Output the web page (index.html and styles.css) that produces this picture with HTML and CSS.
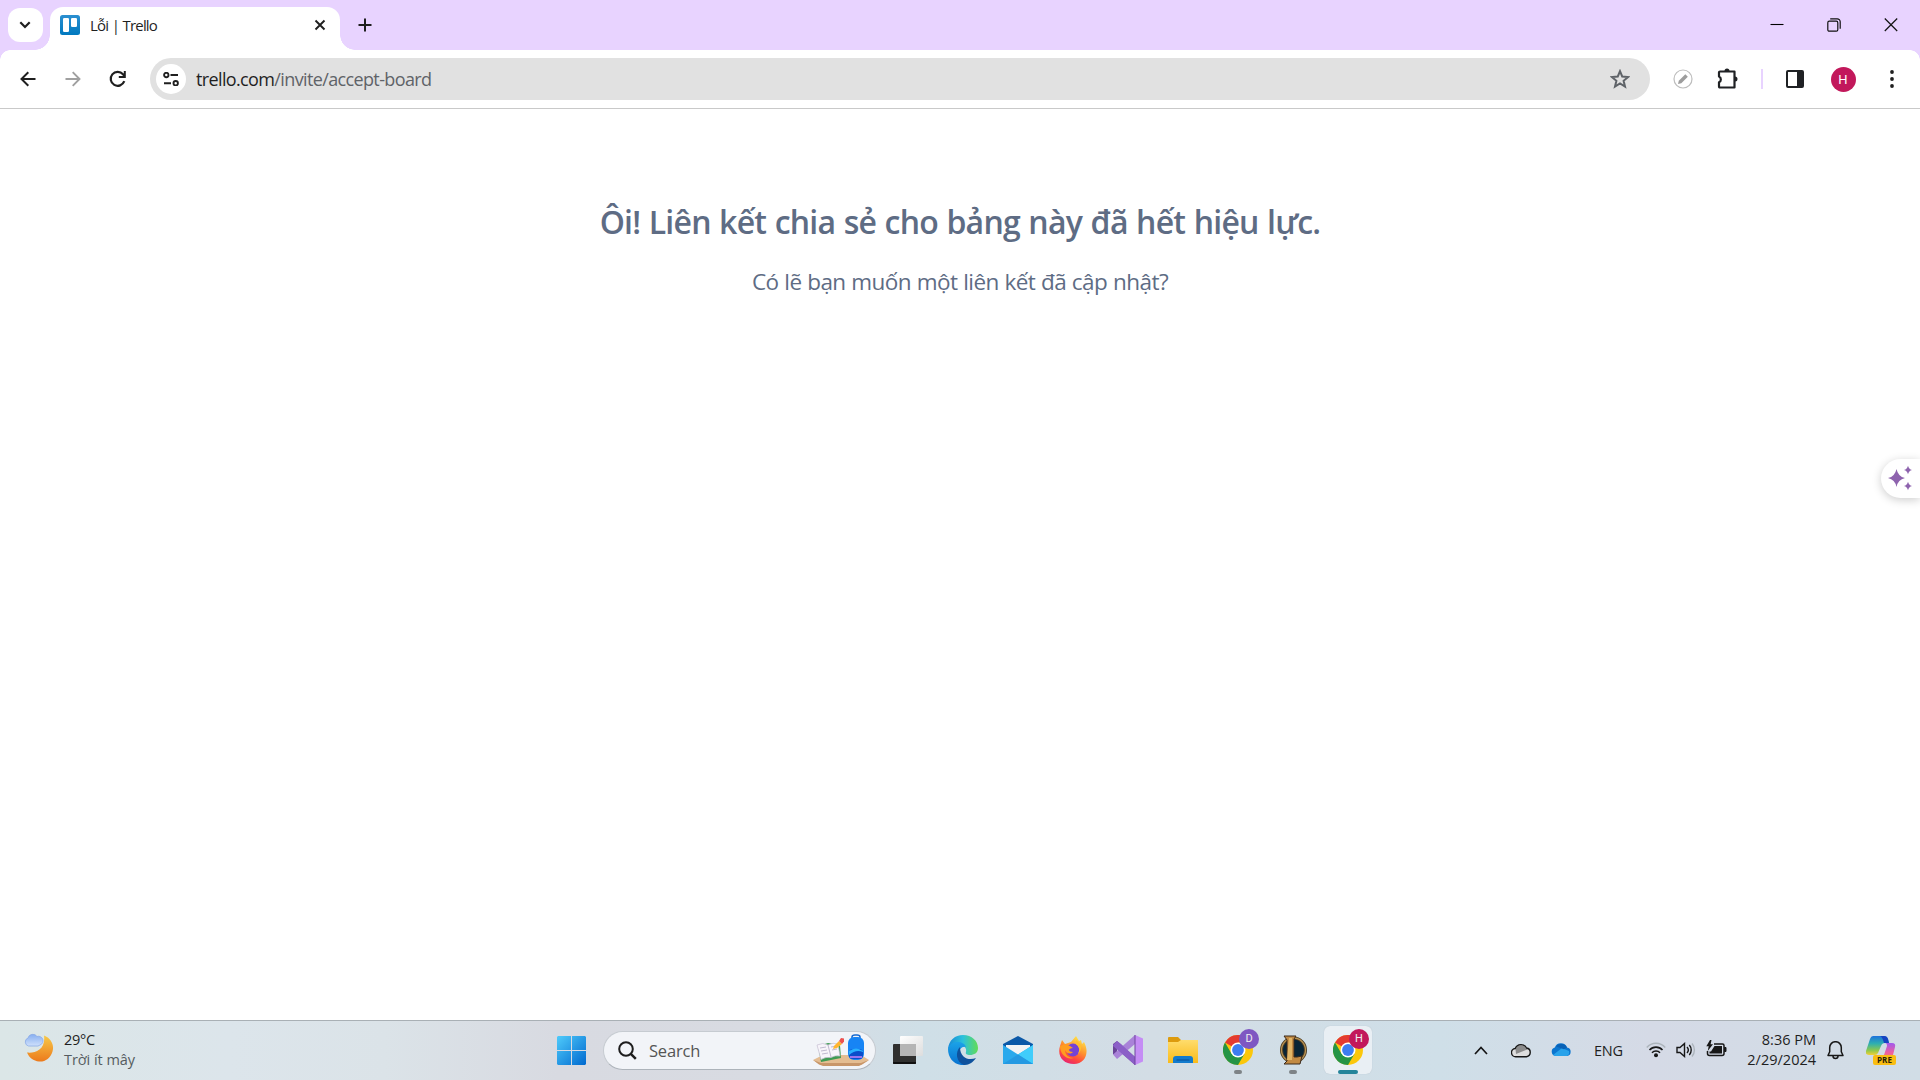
FILE: index.html
```html
<!DOCTYPE html>
<html lang="vi">
<head>
<meta charset="utf-8">
<title>Lỗi | Trello</title>
<link rel="stylesheet" href="styles.css">
</head>
<body>
<div class="screen">
  <header class="tabstrip">
    <button class="tab-search" aria-label="Tabs"><svg width="12" height="8" viewBox="0 0 12 8"><path d="M1.3 1.3 6 6l4.700-4.700" fill="none" stroke="#1f1f1f" stroke-width="2.200"/></svg></button>
    <div class="tab">
      <svg class="favicon" width="20" height="20" viewBox="0 0 20 20"><defs><linearGradient id="tr" x2="0" y2="1"><stop stop-color="#2b8fd0"/><stop offset="1" stop-color="#0079bf"/></linearGradient></defs><rect width="20" height="20" rx="2.500" fill="url(#tr)"/><rect x="3" y="3" width="6" height="14" rx="1.300" fill="#fff"/><rect x="11" y="3" width="6" height="9" rx="1.300" fill="#fff"/></svg>
      <span class="tab-title">Lỗi | Trello</span>
      <svg width="12" height="12" viewBox="0 0 12 12"><path d="M1.500 1.500l9 9m0-9l-9 9" stroke="#1f1f1f" stroke-width="1.900"/></svg>
    </div>
    <svg class="new-tab" width="14" height="14" viewBox="0 0 14 14"><path d="M7 .5v13M.5 7h13" stroke="#1f1f1f" stroke-width="2"/></svg>
    <div class="window-controls">
      <span><svg width="14" height="14" viewBox="0 0 14 14"><path d="M.5 6.500h13" stroke="#000" stroke-width="1.100"/></svg></span>
      <span><svg width="14" height="14" viewBox="0 0 14 14" fill="none" stroke="#111" stroke-width="1.200"><rect x=".8" y="3.200" width="10" height="10" rx="1.500"/><path d="M3.200.8h7a3 3 0 0 1 3 3v7"/></svg></span>
      <span><svg width="14" height="14" viewBox="0 0 14 14"><path d="M.8.5l12.400 12.500M13.200.5.8 13" stroke="#111" stroke-width="1.200"/></svg></span>
    </div>
  </header>

  <nav class="toolbar">
    <span class="nav-btn"><svg width="16" height="16" viewBox="0 0 16 16" fill="none" stroke="#1f1f1f" stroke-width="2"><path d="M15.500 8H2M8.300 1.200 1.500 8l6.800 6.800"/></svg></span>
    <span class="nav-btn"><svg width="16" height="16" viewBox="0 0 16 16" fill="none" stroke="#a0a0a0" stroke-width="1.900"><path d="M.5 8H14M7.700 1.200 14.500 8l-6.800 6.800"/></svg></span>
    <span class="nav-btn"><svg width="18" height="18" viewBox="0 0 18 18"><path d="M15.300 11.200A7 7 0 1 1 14 4.200L15.500 6" fill="none" stroke="#1f1f1f" stroke-width="2.200"/><path d="M16.800 1v7h-7V6h5V1z" fill="#1f1f1f"/></svg></span>
    <div class="omnibox">
      <span class="site-info"><svg width="16" height="14" viewBox="0 0 16 14" fill="none" stroke="#1f1f1f" stroke-width="1.900"><circle cx="3.300" cy="3" r="2.200"/><path d="M7.500 3H15M1 11.200h7"/><circle cx="12.700" cy="11.200" r="2.200"/></svg></span>
      <span class="url">trello.com<span class="path">/invite/accept-board</span></span>
      <svg class="star" width="20" height="20" viewBox="0 0 20 20"><path d="M10 2.200l2.200 5.300 5.900.5-4.500 3.800 1.400 5.700-5-3.100-5 3.100 1.400-5.700L1.900 8l5.900-.5z" fill="none" stroke="#5f6368" stroke-width="2"/></svg>
    </div>
    <span class="ext-pen"><svg width="20" height="20" viewBox="0 0 20 20"><circle cx="10" cy="10" r="9" fill="none" stroke="#bdbdbd" stroke-width="1.200"/><path d="M5 15l.8-3.200 6.500-6.500 2.500 2.500-6.500 6.400z" fill="#9d9d9d"/></svg></span>
    <span class="ext-puzzle"><svg width="22" height="22" viewBox="0 0 22 22"><path d="M3.500 3.500h14v16h-15a1 1 0 0 1-.5-1v-4.200a3.200 3.200 0 0 0 0-5.800V4.500a1 1 0 0 1 1-1z" fill="none" stroke="#1f2124" stroke-width="2.200" stroke-linejoin="round"/><path d="M7.500 3a2.500 2.500 0 0 1 5 0M18 8.500a2.500 2.500 0 0 1 0 5" fill="#1f2124"/></svg></span>
    <span class="divider"><i></i></span>
    <span class="side-panel"><svg width="18" height="18" viewBox="0 0 18 18"><rect x="1" y="1" width="16" height="16" rx="1" fill="#fff" stroke="#1f2124" stroke-width="2"/><path d="M11 1h6v16h-6z" fill="#1f2124"/></svg></span>
    <span class="profile"><b>H</b></span>
    <span class="menu"><svg width="4" height="18" viewBox="0 0 4 18" fill="#1f1f1f"><circle cx="2" cy="2" r="1.900"/><circle cx="2" cy="9" r="1.900"/><circle cx="2" cy="16" r="1.900"/></svg></span>
  </nav>

  <main class="page">
    <h1>Ôi! Liên kết chia sẻ cho bảng này đã hết hiệu lực.</h1>
    <p>Có lẽ bạn muốn một liên kết đã cập nhật?</p>
    <aside class="assistant"><svg width="24" height="26" viewBox="0 0 24 26" fill="#8e63ae"><path d="M8.500 4q1.500 7.500 8.500 9-7 1.500-8.500 9Q7 14.500 0 13 7 11.500 8.500 4zM20 .8q.8 3.400 4 4.200-3.200.8-4 4.200-.8-3.400-4-4.200 3.200-.8 4-4.200zM20 16.800q.8 3.400 4 4.200-3.200.8-4 4.200-.8-3.400-4-4.200 3.200-.8 4-4.200z"/></svg></aside>
  </main>

  <footer class="taskbar">
    <section class="weather">
      <svg width="30" height="30" viewBox="0 0 30 30"><defs><linearGradient id="moon" x2="0" y2="1"><stop stop-color="#f7c948"/><stop offset="1" stop-color="#ec7a1c"/></linearGradient><linearGradient id="wc" x2="0" y2="1"><stop stop-color="#86aef0"/><stop offset="1" stop-color="#cfe0fb"/></linearGradient></defs><path d="M20 2.500C27 5 30.500 12 28.500 18.500 26.500 25.500 21 29 15 28.500 9.500 28 5 24.500 3 19.500c8 1 19-3 17-17z" fill="url(#moon)"/><path d="M4.500 13A4.200 4.200 0 0 1 4 5 5 5 0 0 1 13 3.500 4.500 4.500 0 0 1 16 12l-2 1z" fill="url(#wc)" stroke="#8cabe6" stroke-width=".8"/></svg>
      <div class="weather-text"><span class="temp">29°C</span><span class="sky">Trời ít mây</span></div>
    </section>

    <section class="apps">
      <svg class="start" width="29" height="29" viewBox="0 0 29 29"><defs><linearGradient id="win" x2="1" y2="1"><stop stop-color="#4fcbfb"/><stop offset="1" stop-color="#0069cf"/></linearGradient></defs><path d="M1 0h13v14H0V1zM15 0h13l1 1v13H15zM0 15h14v14H1l-1-1zM15 15h14v13l-1 1H15z" fill="url(#win)"/></svg>
      <div class="search">
        <svg width="19" height="19" viewBox="0 0 19 19" fill="none" stroke="#1d1d1d"><circle cx="8" cy="8" r="6.800" stroke-width="2"/><path d="M12.800 12.800l5 5" stroke-width="2.500"/></svg>
        <span>Search</span>
        <svg class="search-art" width="58" height="34" viewBox="0 0 58 34"><path d="M1 26l10-5h38l8 5-8 5H9z" fill="#e4bd92"/><path d="M1 26l8 3h40l8-3-7 4.500-3 1.500H11l-4-1.500z" fill="#c8966a"/><path d="M6 12l10-3 12 2 1 13-20 4z" fill="#3f9b53"/><path d="M5 11q6-3 11 0 5-3 10-1l2 12q-5-1-9 1.500-5-1-10 2z" fill="#f7f4fa" stroke="#c5bfd2" stroke-width=".7"/><path d="M16 11l3 12M8 14l6-1M9 17l6-1M10 20l6-1M19 13l6-1M20 16l5-1" stroke="#b3abc4" stroke-width=".8"/><path d="M22 12l5-5 3 3-5 4-4 1z" fill="#ffb52f"/><path d="M27 7l2-3 3 .5v3L30 10z" fill="#ed514f"/><path d="M40 5V3q0-2 3-2h2q3 0 3 2v2" fill="none" stroke="#1769cf" stroke-width="1.500"/><rect x="36" y="3" width="16" height="23" rx="6" fill="#1784f4"/><rect x="37" y="15" width="14" height="10" rx="4" fill="#0a4dca"/><path d="M37 21q7-6 14-3v-1q-7-5-14 0z" fill="#28b1ff"/><path d="M38 23h12" stroke="#9875ee" stroke-width="2"/></svg>
      </div>

      <span class="app"><svg width="30" height="30" viewBox="0 0 30 30"><defs><linearGradient id="tv" x2="1" y2="1"><stop stop-color="#fff"/><stop offset="1" stop-color="#ddd"/></linearGradient></defs><rect y="9" width="23" height="20" rx="1" fill="#30302f"/><rect x="7" y="1" width="23" height="20" rx="1" fill="url(#tv)"/><path d="M7 9h16v12H7z" fill="#b5b5b5"/><path d="M0 27h23v1q0 1-1 1H1q-1 0-1-1z" fill="#111"/></svg></span>

      <span class="app"><svg width="30" height="30" viewBox="0 0 30 30"><defs><linearGradient id="e1" x2="1"><stop stop-color="#1789d8"/><stop offset=".5" stop-color="#2bc1dc"/><stop offset="1" stop-color="#63dc55"/></linearGradient><linearGradient id="e2" x2="0" y2="1"><stop stop-color="#1ba2e8"/><stop offset="1" stop-color="#0872d0"/></linearGradient></defs><path d="M0 14C1 5 7 0 15 0c9 0 15 6 15 13 0 5-4 7-8 7-3 0-5-1-4-3 1-4-2-7-7-7-5 0-9 2-11 4z" fill="url(#e1)"/><path d="M0 14c1-4 5-7 9-7 5 0 8 2 9 5-4-1-7 2-7 7 0 6 4 10 9 10-3 1-5 1-7 1C5 29 0 22 0 14z" fill="url(#e2)"/><path d="M12 12c-5 5-4 15 4 18 6 0 9-3 12-7-7 3-16 0-16-11z" fill="#0f529d"/></svg></span>

      <span class="app"><svg width="30" height="30" viewBox="0 0 30 30"><path d="M0 9l15-8 15 8v8H0z" fill="#0b59a8"/><path d="M3 10h24v9L15 24 3 19z" fill="#f3f4f5"/><path d="M0 10l15 9.500L30 10v19H0z" fill="#2aa9ec"/><path d="M30 10v19L15 19.500z" fill="#40cdfb"/><path d="M0 29l15-9.500L30 29z" fill="#2499e2"/></svg></span>

      <span class="app"><svg width="30" height="30" viewBox="0 0 30 30"><defs><linearGradient id="ff" x1=".8" x2=".3" y2="1"><stop stop-color="#fff04f"/><stop offset=".45" stop-color="#ff962e"/><stop offset=".75" stop-color="#ff4a3e"/><stop offset="1" stop-color="#e52374"/></linearGradient></defs><path d="M4 5l3 4 6-2 5-6 3 5 2-1 1 4 2-2c6 11 1 22-10 22C5 29-1 21 2 11z" fill="url(#ff)"/><circle cx="15" cy="15" r="6.500" fill="#7443d5"/><path d="M2 11l5-2 5 2 3 2c-2 0-4 1-4 2s2 2 4 2c-3 3-7 1-8-2 0 5 4 8 9 8-8 2-14-4-14-12z" fill="#ff9d21"/><path d="M18 9q5 4 2 10 7-7-2-14z" fill="#ffbf2d"/></svg></span>

      <span class="app"><svg width="30" height="30" viewBox="0 0 30 30"><path d="M0 9l4-3 18 16v8L4 14v7l-4-2z" fill="#6a4598"/><path d="M4 12v7l4-4z" fill="#d0dce4"/><path d="M0 19.500L4 24 22 9V0L4 16z" fill="#a982d8"/><path d="M0 10l4-4 4 3 14 13v8L0 11z" fill="#8b5fc7"/><path d="M22 0l8 3.500v23L22 30z" fill="#c58df5"/><path d="M22 0v30" stroke="#6f479e"/></svg></span>

      <span class="app"><svg width="30" height="30" viewBox="0 0 30 30"><defs><linearGradient id="fo" x2="0" y2="1"><stop stop-color="#ffdc6c"/><stop offset="1" stop-color="#fabb19"/></linearGradient></defs><path d="M0 3q0-1 1-1h9l3 3h16q1 0 1 1v5H0z" fill="#dd9b0e"/><path d="M0 7h10l3-2h17v23H0z" fill="url(#fo)"/><path d="M5 28v-4q0-3 3-3h14q3 0 3 3v4z" fill="#137bcd"/><path d="M9 25h12" stroke="#084e96" stroke-width="1.200" stroke-linecap="round"/></svg></span>

      <span class="app running"><svg width="30" height="30" viewBox="0 0 30 30"><g id="chrome"><circle cx="15" cy="15" r="15" fill="#fbc70b"/><path d="M15 15L2 7.500A15 15 0 0 1 28 7.500H15z" fill="#e43b30"/><path d="M2 7.500A15 15 0 0 0 15 30l6.500-11.200L8.500 18.800z" fill="#259445"/><circle cx="15" cy="15" r="7.500" fill="#fff"/><circle cx="15" cy="15" r="5.900" fill="#3d7df1"/></g></svg><b class="badge violet">D</b></span>

      <span class="app running"><svg width="30" height="30" viewBox="0 0 30 30"><circle cx="15.500" cy="15" r="12" fill="#092536" stroke="#4c3b22" stroke-width="3"/><circle cx="15.500" cy="15" r="12" fill="none" stroke="#b79252" stroke-width="1.300"/><path d="M6 1h12l-2 3v18h3l5-1-2 8H6l3-3V5z" fill="#c28a43" stroke="#3a2a1c"/><path d="M11 3h3v22H9z" fill="#e1b667"/></svg></span>

      <span class="app running current"><svg width="30" height="30" viewBox="0 0 30 30"><use href="#chrome"/></svg><b class="badge crimson">H</b></span>
    </section>

    <section class="tray">
      <svg class="chevron" width="14" height="9" viewBox="0 0 14 9"><path d="M1 8l6-6.500L13 8" fill="none" stroke="#151515" stroke-width="1.700"/></svg>
      <svg class="cloud" width="20" height="15" viewBox="0 0 20 15"><path d="M5 13.700A4 4 0 0 1 4.200 5.500 6.200 6.200 0 0 1 15.500 5 4.400 4.400 0 0 1 15.500 13.700z" fill="#dedede"/><path d="M4.500 6a5.500 5.500 0 0 1 10.300-.5L17 6.200 5 11z" fill="#8c8c8c"/><path d="M5 13.700A4 4 0 0 1 4.200 5.500 6.200 6.200 0 0 1 15.500 5 4.400 4.400 0 0 1 15.500 13.700z" fill="none" stroke="#171717" stroke-width="1.400"/></svg>
      <svg class="onedrive" width="20" height="14" viewBox="0 0 20 14"><path d="M4.500 13A4.300 4.300 0 0 1 3.800 4.600 6.500 6.500 0 0 1 16 4.500 4.300 4.300 0 0 1 16 13z" fill="#0b75cf"/><path d="M2 12l9-7 7 3a4.300 4.300 0 0 1-2 5H4.500z" fill="#28a2ea"/><path d="M5 3.500A6.500 6.500 0 0 1 16 4.500l-3 1.800z" fill="#0961b5"/></svg>
      <span class="lang">ENG</span>
      <svg class="wifi" width="20" height="16" viewBox="0 0 20 16" fill="none"><path d="M.8 5.500a12 12 0 0 1 18.400 0" stroke="#adb5bc" stroke-width="1.500"/><path d="M3.500 8a8.800 8.800 0 0 1 13 0M6 10.800a5.500 5.500 0 0 1 8 0" stroke="#171717" stroke-width="1.600"/><circle cx="10" cy="13.300" r="2" fill="#171717"/></svg>
      <svg class="volume" width="20" height="16" viewBox="0 0 20 16" fill="none" stroke="#171717" stroke-width="1.400"><path d="M1 5.500h3L8.500 1.500v13L4 10.500H1zM11 5a4.500 4.500 0 0 1 0 6M13.300 3a7.500 7.500 0 0 1 0 10"/><path d="M16 1.500a10 10 0 0 1 0 13" stroke="#adb5bc"/></svg>
      <svg class="battery" width="21" height="17" viewBox="0 0 21 17"><path d="M8 4h8.500Q18 4 18 5.500v8q0 2-2 2H3.500q-2 0-2-2V11" fill="none" stroke="#171717" stroke-width="1.500"/><path d="M8.500 6H16v7.500H3.500v-2H5z" fill="#171717"/><path d="M18.500 7.500H20v4h-1.500z" fill="#171717" stroke="#171717"/><path d="M4 0L.3 6.300h2.400L1.700 11 7 4.300H4.600L5.500 0z" fill="#171717"/></svg>
      <div class="clock"><span>8:36 PM</span><span>2/29/2024</span></div>
      <svg class="bell" width="17" height="19" viewBox="0 0 17 19" fill="none" stroke="#171717" stroke-width="1.500"><path d="M1 14.500l1.700-3.700V6.500a5.800 5.800 0 0 1 11.600 0v4.300L16 14.500z" stroke-linejoin="round"/><path d="M6 15a2.500 2.500 0 0 0 5 0"/></svg>
      <div class="copilot">
        <svg width="30" height="30" viewBox="0 0 30 30"><defs><linearGradient id="c1" x2="0" y2="1"><stop stop-color="#1d72dc"/><stop offset=".4" stop-color="#2eafb0"/><stop offset=".75" stop-color="#8bc84e"/><stop offset="1" stop-color="#f2cf35"/></linearGradient><linearGradient id="c2" x2="0" y2="1"><stop stop-color="#a05aee"/><stop offset=".5" stop-color="#ed5fa1"/><stop offset="1" stop-color="#ff8b4a"/></linearGradient></defs><path d="M7 1h11q3 0 4 3l1 4h-4q-3 0-4 3l-3 7q-1 2-3 2H3q-4 0-3-4L4 4q1-3 3-3z" fill="url(#c1)"/><path d="M14 1h4q3 0 4 3l1 4h-5q-2-7-4-7z" fill="#1644c1"/><path d="M19 8h7q4 0 3 4l-3 12q-1 3-4 3h-9q3-1 4-4l4-12q0-3-2-3z" fill="url(#c2)"/></svg>
        <b>PRE</b>
      </div>
    </section>
  </footer>
</div>
</body>
</html>
```
FILE: styles.css
```css
* { box-sizing: border-box; }
body { margin: 0; font-family: "Open Sans", "Noto Sans", sans-serif; color: #1f1f1f; }
svg { display: block; flex: none; }
.screen { width: 1920px; height: 1080px; display: flex; flex-direction: column; overflow: hidden; background: #fff; }

.tabstrip { height: 50px; flex: none; display: flex; align-items: center; background: #e8d3ff; padding-left: 8px; }
.tab-search { width: 35px; height: 34px; border: 0; padding: 0 1px 0 0; border-radius: 12px; background: #fff; display: flex; align-items: center; justify-content: center; }
.tab { position: relative; width: 290px; height: 43px; margin: 7px 0 0 7px; padding: 0 14px 7px 10px; border-radius: 13px 13px 0 0; background: #fff; display: flex; align-items: center; }
.tab::before, .tab::after { content: ""; position: absolute; bottom: 0; width: 15px; height: 15px; }
.tab::before { left: -15px; background: radial-gradient(circle at 0 0, transparent 14.5px, #fff 15px); }
.tab::after { right: -15px; background: radial-gradient(circle at 100% 0, transparent 14.5px, #fff 15px); }
.tab-title { flex: 1; margin-left: 10px; font-size: 15px; letter-spacing: -0.8px; word-spacing: 0.3px; line-height: 20px; }
.new-tab { margin-left: 18px; }
.window-controls { margin-left: auto; padding-right: 1px; display: flex; }
.window-controls span { width: 57px; height: 50px; display: flex; align-items: center; justify-content: center; }

.toolbar { position: relative; height: 59px; flex: none; display: flex; align-items: center; padding: 0 15px 0 5px; border-bottom: 1px solid #c9c9c9; background: #fff; }
.toolbar::before, .toolbar::after { content: ""; position: absolute; top: 0; width: 10px; height: 10px; }
.toolbar::before { left: 0; background: radial-gradient(circle at 100% 100%, transparent 9.5px, #e8d3ff 10px); }
.toolbar::after { right: 0; background: radial-gradient(circle at 0 100%, transparent 9.5px, #e8d3ff 10px); }
.toolbar > span { display: flex; justify-content: center; align-items: center; }
.nav-btn { width: 45px; }
.omnibox { flex: 1; height: 42px; margin-left: 10px; padding: 0 20px 0 6px; border-radius: 21px; background: #e1e1e1; display: flex; align-items: center; }
.site-info { width: 30px; height: 30px; border-radius: 50%; background: #fff; display: flex; align-items: center; justify-content: center; }
.url { flex: 1; margin-left: 10px; font-size: 18px; letter-spacing: -0.63px; line-height: 24px; }
.path { color: #5f6368; }
.ext-pen { width: 65px; }
.ext-puzzle { width: 26px; }
.side-panel { width: 24px; }
.divider { width: 42px; }
.divider i { width: 2px; height: 20px; background: #e8d3ff; }
.profile { width: 72px; }
.profile b { width: 25px; height: 25px; border-radius: 50%; background: #c2185b; color: #fff; font: 400 13px/25px Roboto, sans-serif; text-align: center; }
.menu { width: 26px; }

.page { position: relative; flex: 1; text-align: center; color: #5e6c84; padding-top: 90px; }
.page h1 { margin: 0; font-size: 32px; font-weight: 600; line-height: 46px; letter-spacing: -0.75px; word-spacing: 0.8px; }
.page p { margin: 20px 0 0; font-size: 22.5px; line-height: 34px; letter-spacing: -0.55px; word-spacing: 0.4px; }
.assistant { position: absolute; right: 0; top: 350px; width: 39px; height: 39px; padding: 6px 0 0 7px; border-radius: 20px 0 0 20px; background: #fff; box-shadow: 0 2px 10px rgba(0, 0, 0, 0.2); }

.taskbar { height: 60px; flex: none; display: grid; grid-template-columns: 557px 917px 1fr; padding-bottom: 1px; border-top: 1px solid #a9b0b5; background: linear-gradient(90deg, #dbe6e7 0, #dce5eb 12%, #dbe3e8 20%, #d8dae1 29%, #d8dbe2 40%, #cfdfe7 48%, #d3dde5 60%, #cfdfe8 75%, #d5dae6 86%, #d1dde6 100%); }
.taskbar > section { display: flex; align-items: center; }
.weather { padding-left: 24px; }
.weather svg { margin-bottom: 4px; }
.weather-text { display: flex; flex-direction: column; margin: 0 0 1px 10px; font-size: 14.5px; line-height: 20px; }
.temp { letter-spacing: -0.3px; }
.sky { color: #555c60; letter-spacing: -0.05px; }
.search { width: 273px; height: 39px; margin: 0 7px 0 17px; padding: 0 6px 0 14px; border: 1px solid #c6cbd1; border-bottom-color: #adb3ba; border-radius: 20px; background: #f2f4f8; display: flex; align-items: center; }
.search span { flex: 1; margin-left: 12px; font-size: 16.5px; color: #555; letter-spacing: -0.2px; }
.search-art { margin: 2px -1px 0 0; }
.app { position: relative; width: 48px; height: 48px; margin-right: 7px; border-radius: 6px; display: flex; align-items: center; justify-content: center; }
.search + .app { margin-left: 1px; }
.current { background: #e9eff4; box-shadow: 0 0 1px #aebbc5; }
.running::after { content: ""; position: absolute; bottom: 0; left: 20px; width: 8px; height: 4px; border-radius: 2px; background: #7e8387; }
.current::after { left: 14px; width: 20px; background: #24849a; }
.badge { position: absolute; left: 25px; top: 3px; width: 20px; height: 20px; border-radius: 50%; color: #eee; font: 400 11px/20px Roboto, sans-serif; text-align: center; }
.violet { background: #7e57c2; }
.crimson { background: #c2185b; }
.chevron { margin-left: 0; }
.cloud { margin-left: 23px; }
.onedrive { margin-left: 20px; }
.lang { margin-left: 23px; width: 30px; font-size: 14.5px; letter-spacing: -0.2px; }
.wifi { margin-left: 22px; }
.volume { margin-left: 10px; }
.battery { margin: 0 0 3px 10px; }
.clock { width: 89px; margin-bottom: 1px; display: flex; flex-direction: column; text-align: right; font-size: 14.5px; line-height: 20px; letter-spacing: 0; }
.bell { margin-left: 11px; }
.copilot { position: relative; margin-left: 22px; }
.copilot b { position: absolute; left: 7px; bottom: 0; width: 23px; height: 10px; border-radius: 2px; background: #f9bd12; color: #271e08; font-size: 8px; line-height: 10px; text-align: center; }
```
